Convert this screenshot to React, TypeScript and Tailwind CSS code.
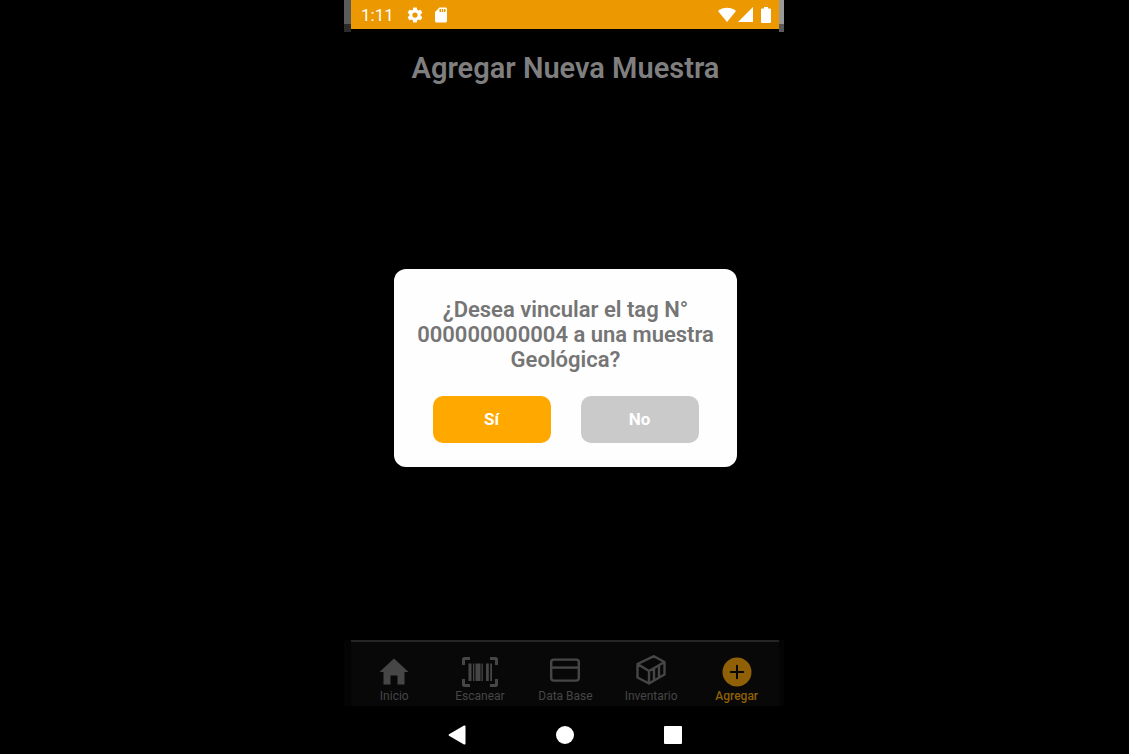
import type { ReactNode } from "react";

function HomeIcon() {
  return (
    <svg viewBox="0 0 30 30" className="h-[30px] w-[30px]" fill="currentColor" aria-hidden="true">
      <path d="M15 1.5 29.5 15H25.5v12.5h-7V18.5h-7v9H4.5V15H.5z" />
    </svg>
  );
}

function ScanIcon() {
  return (
    <svg viewBox="0 0 36 30" className="h-[30px] w-9" aria-hidden="true">
      <path
        d="M1.5 8V2.5q0-1 1-1H8M28 1.5h5.500q1 0 1 1V8M34.5 22v5.500q0 1-1 1H28M8 28.5H2.500q-1 0-1-1V22"
        fill="none"
        stroke="currentColor"
        strokeWidth="3"
      />
      <path
        d="M6.500 6.500h3v17.500h-3zM11 6.500h1.300v17.500H11zM13.500 6.500h5v17.500h-5zM19.500 6.500h1.300v17.500h-1.300zM24 6.500h2.800v17.500H24zM28.200 6.500h1.800v17.500h-1.800z"
        fill="currentColor"
      />
    </svg>
  );
}

function CardIcon() {
  return (
    <svg viewBox="0 0 30 30" className="h-[30px] w-[30px]" fill="none" stroke="currentColor" strokeWidth="2.4" aria-hidden="true">
      <rect x="1.2" y="2.6" width="27.6" height="21" rx="2.5" />
      <path d="M1.2 10.6h27.6" />
    </svg>
  );
}

function ContainerIcon() {
  return (
    <svg
      viewBox="0 0 30 30"
      className="h-[30px] w-[30px] overflow-visible"
      fill="none"
      stroke="currentColor"
      strokeWidth="2.4"
      strokeLinejoin="round"
      strokeLinecap="round"
      aria-hidden="true"
    >
      <path d="M1.5 7 18 -.8 28.5 5V17.5L13 26.5 1.5 20.5zM1.5 7 13 14 28.5 5M13 14v12.5M18 11.500v11.500M23 8.500v11.500" />
    </svg>
  );
}

function AddIcon() {
  return (
    <svg viewBox="0 0 30 30" className="h-[30px] w-[30px]" aria-hidden="true">
      <circle cx="15" cy="15" r="14.5" fill="currentColor" />
      <path d="M15 8.7v12.6M8.7 15h12.6" stroke="#080808" strokeWidth="2" strokeLinecap="round" fill="none" />
    </svg>
  );
}

type Tab = { label: string; icon: ReactNode; active?: boolean };

const tabs: Tab[] = [
  { label: "Inicio", icon: <HomeIcon /> },
  { label: "Escanear", icon: <ScanIcon /> },
  { label: "Data Base", icon: <CardIcon /> },
  { label: "Inventario", icon: <ContainerIcon /> },
  { label: "Agregar", icon: <AddIcon />, active: true },
];

function StatusBar() {
  return (
    <header className="flex items-start">
      <div className="w-[7px] border-b-8 border-[#2b2b2b]">
        <div className="h-6 bg-[#5b5b5b]" />
      </div>
      <div className="flex h-[29px] flex-1 items-center justify-between bg-[#ec9800] pr-2 pl-2.5 text-white">
        <div className="flex items-center">
          <span className="w-8 text-[17px] leading-5">1:11</span>
          <svg viewBox="0 0 24 24" className="ml-[13px] h-[18px] w-[18px]" fill="currentColor" aria-hidden="true">
            <path d="M19.43 12.98c.04-.32.07-.64.07-.98s-.03-.66-.07-.98l2.11-1.65c.19-.15.24-.42.12-.64l-2-3.46c-.12-.22-.39-.3-.61-.22l-2.49 1c-.52-.4-1.08-.73-1.69-.98l-.38-2.65A.49.49 0 0 0 14 2h-4c-.25 0-.46.18-.49.42l-.38 2.65c-.61.25-1.17.59-1.69.98l-2.49-1c-.23-.09-.49 0-.61.22l-2 3.46c-.13.22-.07.49.12.64l2.11 1.65c-.04.32-.07.65-.07.98s.03.66.07.98l-2.11 1.65c-.19.15-.24.42-.12.64l2 3.46c.12.22.39.3.61.22l2.49-1c.52.4 1.08.73 1.69.98l.38 2.65c.03.24.24.42.49.42h4c.25 0 .46-.18.49-.42l.38-2.65c.61-.25 1.17-.59 1.69-.98l2.49 1c.23.09.49 0 .61-.22l2-3.46c.12-.22.07-.49-.12-.64l-2.11-1.65zM12 15.5a3.5 3.5 0 1 1 0-7 3.5 3.5 0 0 1 0 7z" />
          </svg>
          <svg viewBox="0 0 24 24" className="ml-2 h-[18px] w-[18px]" fill="currentColor" aria-hidden="true">
            <path d="M18 2h-8L4 8v12c0 1.1.9 2 2 2h12c1.1 0 2-.9 2-2V4c0-1.1-.9-2-2-2zm-6 6h-2V4h2v4zm3 0h-2V4h2v4zm3 0h-2V4h2v4z" />
          </svg>
        </div>
        <div className="flex items-center gap-0.5">
          <svg viewBox="0 0 18 15" className="h-[15px] w-[18px]" fill="currentColor" aria-hidden="true">
            <path d="M0 4C5-.4 13-.4 18 4L9 15z" />
          </svg>
          <svg viewBox="0 0 15 15" className="h-[15px] w-[15px]" fill="currentColor" aria-hidden="true">
            <path d="M15 0v15H0z" />
          </svg>
          <svg viewBox="0 0 10 16" className="ml-1.5 h-4 w-2.5" fill="currentColor" aria-hidden="true">
            <path d="M3 0h4v1.5h2a1 1 0 0 1 1 1V15a1 1 0 0 1-1 1H1a1 1 0 0 1-1-1V2.5a1 1 0 0 1 1-1h2z" />
          </svg>
        </div>
      </div>
      <div className="w-[5px] border-b-8 border-[#5b5b5b]">
        <div className="h-6 bg-[#999999]" />
      </div>
    </header>
  );
}

function TabBar() {
  return (
    <nav className="bg-[#040404] pr-[5px] pl-[7px]">
      <ul className="grid h-[66px] grid-cols-5 border-t-2 border-[#252525] bg-[#080808]">
        {tabs.map((tab) => (
          <li key={tab.label}>
            <a
              href="#"
              aria-current={tab.active ? "page" : undefined}
              className={
                tab.active
                  ? "flex flex-col items-center pt-[15px] pl-px font-medium text-[#8f6005]"
                  : "flex flex-col items-center pt-[15px] pl-px text-[#464646]"
              }
            >
              {tab.icon}
              <span className="text-xs leading-[18px] whitespace-nowrap">{tab.label}</span>
            </a>
          </li>
        ))}
      </ul>
    </nav>
  );
}

function LinkDialog() {
  return (
    <div className="absolute inset-0 flex items-center justify-center pb-0.5 pl-[3px]">
      <div
        role="dialog"
        aria-modal="true"
        aria-labelledby="dialog-title"
        className="w-[343px] rounded-xl bg-[#fefefe] px-5 pt-7 pb-6"
      >
        <h2 id="dialog-title" className="text-center text-[22px] leading-[25px] font-semibold text-[#757575]">
          ¿Desea vincular el tag N° 000000000004 a una muestra Geológica?
        </h2>
        <div className="mt-6 flex justify-center gap-[30px] text-[17px] font-bold text-white">
          <button type="button" className="h-[47px] w-[118px] rounded-[10px] bg-[#ffa800]">
            Sí
          </button>
          <button type="button" className="h-[47px] w-[118px] rounded-[10px] bg-[#cacaca]">
            No
          </button>
        </div>
      </div>
    </div>
  );
}

function SystemBar() {
  return (
    <footer className="flex h-12 items-center justify-center gap-[90px] pt-2.5 pl-0.5 text-white">
      <button type="button" aria-label="Back">
        <svg viewBox="0 0 18 20" className="h-5 w-[18px]" fill="currentColor" aria-hidden="true">
          <path d="M1 9.2 16 .6q1.500-.5 1.500 1v16.800q0 1.500-1.500 1L1 10.800q-1-.8 0-1.600z" />
        </svg>
      </button>
      <button type="button" aria-label="Home" className="h-[18px] w-[18px] rounded-full bg-white" />
      <button type="button" aria-label="Recents" className="h-[18px] w-[18px] rounded-[1px] bg-white" />
    </footer>
  );
}

export default function App() {
  return (
    <div className="min-h-screen bg-black pr-px font-['Roboto',sans-serif]">
      <div className="mx-auto flex min-h-screen max-w-[440px] flex-col">
        <StatusBar />
        <div className="relative flex flex-1 flex-col">
          <main className="flex-1 pt-4 pl-[3px]">
            <h1 className="text-center text-[29px] leading-10 font-semibold text-[#7f7f7f]">Agregar Nueva Muestra</h1>
          </main>
          <TabBar />
          <LinkDialog />
        </div>
        <SystemBar />
      </div>
    </div>
  );
}
